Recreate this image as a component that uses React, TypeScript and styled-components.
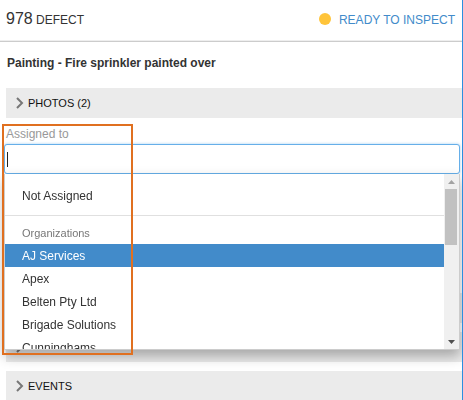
import React, { useState } from "react";
import styled, { createGlobalStyle } from "styled-components";

const Global = createGlobalStyle`
  *, *::before, *::after { box-sizing: border-box; }
  body {
    margin: 0;
    overflow: hidden;
    background: #fff;
    color: #333;
    font-family: "Liberation Sans", Arial, sans-serif;
    font-size: 12px;
  }
`;

const Page = styled.main`
  height: 100vh;
  overflow: hidden;
  border-right: 1px solid #2b8fe0;
`;

const Header = styled.header`
  display: flex;
  align-items: center;
  justify-content: space-between;
  height: 42px;
  padding: 0 7px 2px 6px;
  border-bottom: 1px solid #ccc;
  box-shadow: inset 0 -1px #eee;
`;

const Heading = styled.h1`
  margin: 0;
  font-size: 12px;
  line-height: 20px;
  font-weight: 400;
`;

const Count = styled.span`
  font-size: 16px;
`;

const Status = styled.a`
  display: flex;
  align-items: center;
  gap: 8px;
  color: #428bca;
  line-height: 20px;
  text-decoration: none;
`;

const Dot = styled.span`
  width: 12px;
  height: 12px;
  margin-bottom: 2px;
  border-radius: 50%;
  background: #ffc43a;
`;

const Title = styled.h2`
  margin: 0;
  padding: 12px 7px 16px;
  font-size: 12px;
  line-height: 18px;
  font-weight: 700;
`;

const Bar = styled.button`
  display: flex;
  align-items: center;
  gap: 4px;
  width: calc(100% - 6px);
  height: 30px;
  margin: 0 0 9px 6px;
  padding: 0 10px;
  border: 0;
  background: #ebebeb;
  color: #111;
  font: inherit;
  font-size: 11px;
`;

const Field = styled.div`
  position: relative;
  margin: -2px 2px 119px 4px;
`;

const Label = styled.label`
  display: block;
  padding: 0 2px;
  color: #999;
  font-size: 12px;
  line-height: 19px;
`;

const Input = styled.input`
  display: block;
  width: 100%;
  height: 30px;
  padding: 0 3px;
  border: 1px solid #66afe9;
  border-radius: 3px;
  outline: 0;
  box-shadow: 0 0 3px rgba(102, 175, 233, 0.6);
  color: #333;
  font: inherit;
  caret-color: transparent;
`;

const Caret = styled.span`
  position: absolute;
  top: 27px;
  left: 3px;
  width: 1px;
  height: 15px;
  background: #222;
  pointer-events: none;
`;

const Menu = styled.div`
  position: absolute;
  z-index: 1;
  top: 100%;
  left: 0;
  right: 0;
  display: flex;
  height: 176px;
  overflow: hidden;
  border: 1px solid #ccc;
  border-top: 0;
  background: #fff;
  box-shadow: 0 6px 12px rgba(0, 0, 0, 0.3);
`;

const Options = styled.div`
  flex: 1;
  overflow: hidden;
`;

const Option = styled.button<{ $active?: boolean }>`
  display: block;
  width: 100%;
  height: 23px;
  padding: 1px 17px 0;
  border: 0;
  background: ${(p) => (p.$active ? "#428bca" : "transparent")};
  color: ${(p) => (p.$active ? "#fff" : "#333")};
  font: inherit;
  line-height: 22px;
  text-align: left;
`;

const Unassigned = styled.div`
  padding: 10px 0 8px;
  border-bottom: 1px solid #e0e0e0;
`;

const GroupLabel = styled.div`
  padding: 9px 17px 2px;
  color: #777;
  font-size: 11px;
  line-height: 17px;
`;

const ScrollTrack = styled.div`
  display: flex;
  flex-direction: column;
  width: 15px;
  padding: 0 2px 0 1px;
  background: #f0f0f0;
`;

const ScrollButton = styled.button`
  display: grid;
  place-items: center;
  height: 15px;
  padding: 0;
  border: 0;
  background: transparent;
`;

const Thumb = styled.div`
  height: 56px;
  margin-bottom: auto;
  background: #c1c1c1;
`;

const Callout = styled.div`
  position: absolute;
  z-index: 2;
  top: -1px;
  left: -2px;
  width: 131px;
  height: 231px;
  border: 2px solid #e07020;
  pointer-events: none;
`;

const Chevron = () => (
  <svg width="8" height="12" viewBox="0 0 8 12" fill="none" stroke="#777" strokeWidth="2" aria-hidden="true">
    <path d="M1 1 6 6 1 11" />
  </svg>
);

const organizations = ["AJ Services", "Apex", "Belten Pty Ltd", "Brigade Solutions", "Cunninghams"];

export default function App() {
  const [query, setQuery] = useState("");
  const [active, setActive] = useState("AJ Services");

  return (
    <>
      <Global />
      <Page>
        <Header>
          <Heading><Count>978</Count> DEFECT</Heading>
          <Status href="#status"><Dot />READY TO INSPECT</Status>
        </Header>
        <Title>Painting - Fire sprinkler painted over</Title>
        <Bar><Chevron />PHOTOS (2)</Bar>
        <Field>
          <Label htmlFor="assignee">Assigned to</Label>
          <Input id="assignee" autoFocus autoComplete="off" value={query} onChange={(e) => setQuery(e.target.value)} />
          {query === "" && <Caret />}
          <Menu>
            <Options>
              <Unassigned>
                <Option>Not Assigned</Option>
              </Unassigned>
              <GroupLabel>Organizations</GroupLabel>
              {organizations.map((name) => (
                <Option key={name} $active={name === active} onClick={() => setActive(name)}>{name}</Option>
              ))}
            </Options>
            <ScrollTrack>
              <ScrollButton aria-label="Scroll up">
                <svg width="7" height="4" viewBox="0 0 7 4"><path d="M3.5 0 7 4H0z" fill="#a3a3a3" /></svg>
              </ScrollButton>
              <Thumb />
              <ScrollButton aria-label="Scroll down">
                <svg width="7" height="4" viewBox="0 0 7 4"><path d="M3.5 4 7 0H0z" fill="#505050" /></svg>
              </ScrollButton>
            </ScrollTrack>
          </Menu>
          <Callout />
        </Field>
        <Bar aria-label="Details"><Chevron /></Bar>
        <Bar aria-label="Notes"><Chevron /></Bar>
        <Bar><Chevron />EVENTS</Bar>
      </Page>
    </>
  );
}
